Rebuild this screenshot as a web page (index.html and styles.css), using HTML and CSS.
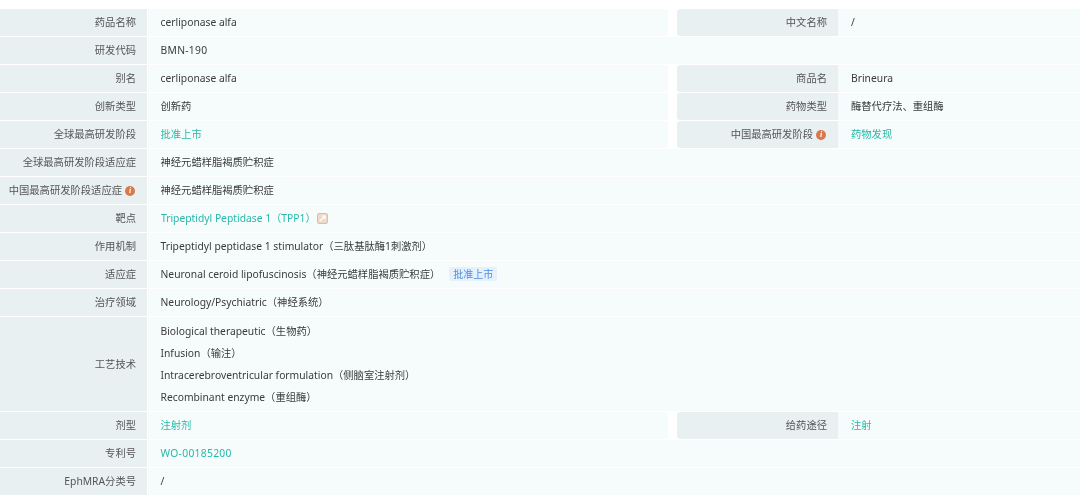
FILE: index.html
```html
<!DOCTYPE html>
<html lang="zh">
<head>
<meta charset="utf-8">
<title>药品信息</title>
<link rel="stylesheet" href="styles.css">
</head>
<body>
<div class="sheet">
  <div class="row">
    <div class="label">药品名称</div><div class="value half">cerliponase alfa</div>
    <div class="label second">中文名称</div><div class="value end">/</div>
  </div>
  <div class="row"><div class="label">研发代码</div><div class="value code">BMN-190</div></div>
  <div class="row">
    <div class="label">别名</div><div class="value half">cerliponase alfa</div>
    <div class="label second">商品名</div><div class="value end">Brineura</div>
  </div>
  <div class="row">
    <div class="label">创新类型</div><div class="value half">创新药</div>
    <div class="label second">药物类型</div><div class="value end">酶替代疗法、重组酶</div>
  </div>
  <div class="row">
    <div class="label">全球最高研发阶段</div><div class="value half link">批准上市</div>
    <div class="label second">中国最高研发阶段<span class="info">i</span></div><div class="value end link">药物发现</div>
  </div>
  <div class="row"><div class="label">全球最高研发阶段适应症</div><div class="value">神经元蜡样脂褐质贮积症</div></div>
  <div class="row"><div class="label">中国最高研发阶段适应症<span class="info">i</span></div><div class="value">神经元蜡样脂褐质贮积症</div></div>
  <div class="row"><div class="label">靶点</div><div class="value link target">Tripeptidyl Peptidase 1（TPP1）<svg class="ext" width="11" height="11" viewBox="0 0 11 11"><rect x="0.5" y="0.5" width="10" height="10" rx="1.5" fill="#efd9c8" stroke="#e3bb9f"/><path d="M3 8 8 3M5 3h3v3" fill="none" stroke="#fff" stroke-width="1.2"/></svg></div></div>
  <div class="row"><div class="label">作用机制</div><div class="value">Tripeptidyl peptidase 1 stimulator（三肽基肽酶1刺激剂）</div></div>
  <div class="row"><div class="label">适应症</div><div class="value">Neuronal ceroid lipofuscinosis（神经元蜡样脂褐质贮积症）<span class="tag">批准上市</span></div></div>
  <div class="row"><div class="label">治疗领域</div><div class="value">Neurology/Psychiatric（神经系统）</div></div>
  <div class="row tall">
    <div class="label">工艺技术</div>
    <div class="value stack">
      <div class="line">Biological therapeutic（生物药）</div>
      <div class="line">Infusion（输注）</div>
      <div class="line">Intracerebroventricular formulation（侧脑室注射剂）</div>
      <div class="line">Recombinant enzyme（重组酶）</div>
    </div>
  </div>
  <div class="row">
    <div class="label">剂型</div><div class="value half link">注射剂</div>
    <div class="label second">给药途径</div><div class="value end link">注射</div>
  </div>
  <div class="row"><div class="label">专利号</div><div class="value link code">WO-00185200</div></div>
  <div class="row"><div class="label">EphMRA分类号</div><div class="value">/</div></div>
</div>
</body>
</html>
```
FILE: styles.css
```css
html, body {
  margin: 0;
  padding: 0;
  background: #fff;
}
.sheet {
  padding-top: 9px;
  display: flex;
  flex-direction: column;
  gap: 1px;
  font-family: "Noto Sans", "Noto Sans CJK SC", sans-serif;
  font-size: 10.3px;
  color: #3a3a3a;
  filter: blur(0.35px);
}
.row {
  display: flex;
  height: 27px;
  line-height: 27px;
}
.row.tall {
  height: 94px;
}
.label {
  width: 136px;
  flex: none;
  padding-right: 11px;
  margin-right: 1px;
  background: #e8f0f1;
  color: #555;
  text-align: right;
  display: flex;
  justify-content: flex-end;
  align-items: center;
}
.label.second {
  width: 150px;
  margin-left: 9px;
  margin-right: 0;
  border-radius: 3px 0 0 3px;
}
.value {
  flex: 1;
  padding-left: 12.5px;
  background: #f6fcfc;
  white-space: nowrap;
}
.value.half {
  flex: none;
  width: 507.5px;
}
.value.end {
  padding-left: 13px;
}
.code {
  letter-spacing: 0.3px;
}
.link {
  color: #28b8a9;
}
.target {
  display: flex;
  align-items: center;
  padding-left: 13px;
}
.stack {
  padding-top: 3px;
  box-sizing: border-box;
}
.line {
  height: 22px;
  line-height: 22px;
}
.info {
  width: 10px;
  height: 10px;
  margin: 0 1px 0 3px;
  border-radius: 50%;
  background: #d9794a;
  color: #fff;
  font: italic bold 8px/10px "Liberation Serif", serif;
  text-align: center;
}
.ext {
  margin-left: 1px;
}
.tag {
  display: inline-block;
  margin-left: 9px;
  padding: 0 4px;
  height: 14px;
  line-height: 14px;
  font-size: 10px;
  vertical-align: 0;
  border-radius: 2px;
  background: #e6f1fd;
  color: #4a90e2;
}
```
